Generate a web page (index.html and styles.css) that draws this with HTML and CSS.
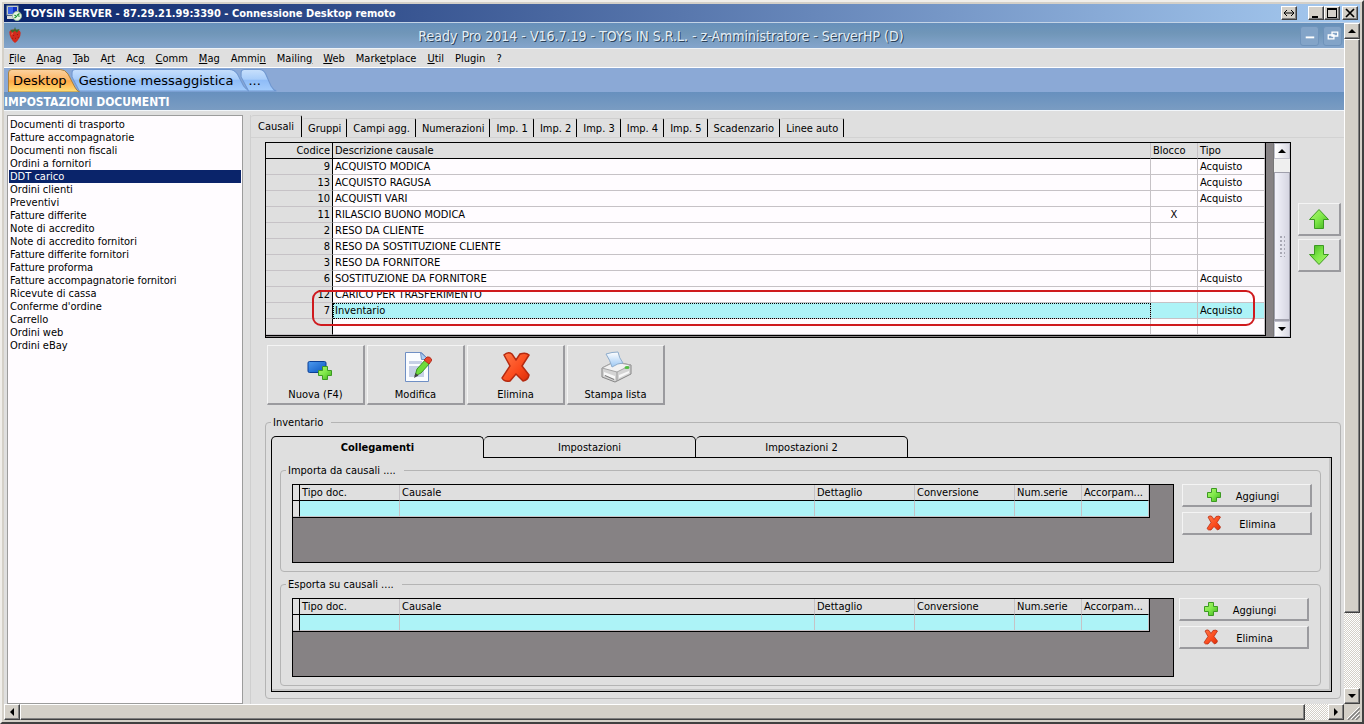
FILE: index.html
```html
<!DOCTYPE html>
<html lang="it">
<head>
<meta charset="utf-8">
<title>TOYSIN SERVER - Connessione Desktop remoto</title>
<link rel="stylesheet" href="styles.css">
</head>
<body>
<svg class="defs" aria-hidden="true">
  <defs>
    <linearGradient id="gGreen" x1="0" y1="0" x2="1" y2="1"><stop offset="0" stop-color="#b4f573"/><stop offset=".5" stop-color="#7ee848"/><stop offset="1" stop-color="#3fae1c"/></linearGradient>
    <linearGradient id="gRed" x1="0" y1="0" x2="1" y2="1"><stop offset="0" stop-color="#ff7a4a"/><stop offset=".6" stop-color="#fb4a1c"/><stop offset="1" stop-color="#d92c08"/></linearGradient>
    <linearGradient id="gBlue" x1="0" y1="0" x2="1" y2="1"><stop offset="0" stop-color="#4d9bf0"/><stop offset="1" stop-color="#0a55c0"/></linearGradient>
    <linearGradient id="gPaper" x1="0" y1="0" x2="0" y2="1"><stop offset="0" stop-color="#fff"/><stop offset="1" stop-color="#9cc8f4"/></linearGradient>
    <linearGradient id="gOrange" x1="0" y1="0" x2="0" y2="1"><stop offset="0" stop-color="#fbd2a0"/><stop offset=".45" stop-color="#fdb665"/><stop offset=".5" stop-color="#fda843"/><stop offset="1" stop-color="#ffe07a"/></linearGradient>
    <linearGradient id="gTab" x1="0" y1="0" x2="0" y2="1"><stop offset="0" stop-color="#c8e0fc"/><stop offset=".45" stop-color="#a8cdfa"/><stop offset=".5" stop-color="#8fbcf7"/><stop offset="1" stop-color="#a4ccfc"/></linearGradient>
    <symbol id="plus" viewBox="0 0 16 16"><path d="M5.500 1.500h5v4h4v5h-4v4h-5v-4h-4v-5h4z" fill="url(#gGreen)" stroke="#3c9a22"/></symbol>
    <symbol id="cross" viewBox="0 0 32 32"><path d="M4 4Q8 0 12 3L16 9L20 3Q26 1 29 4L22 15L29 24Q28 29 23 30L16 23L10 30Q4 31 2 27L10 15Z" fill="url(#gRed)" stroke="#b52a10" stroke-width="1.500"/></symbol>
    <symbol id="arrow" viewBox="0 0 22 22"><path d="M11 1.500L20.500 11.500H15.500V20.500H6.500V11.500H1.500Z" fill="url(#gGreen)" stroke="#3c9a22"/></symbol>
  </defs>
</svg>
<div class="window">
  <header class="rdp-bar">
    <svg class="rdp-icon" viewBox="0 0 16 16"><rect x="1" y="1" width="11" height="9" fill="#e6e6e6" stroke="#9aa"/><rect x="2" y="2" width="9" height="7" fill="#1030c0"/><path d="M2 2h5v7h-5z" fill="#3a62e8"/><path d="M1 11h11l2 3H1z" fill="#d8d8d8"/><circle cx="11" cy="11" r="4.500" fill="#e8f4e4" stroke="#9ab89a"/><path d="M8.500 10l2 1.500-2 1.500M13.500 8.500l-2 1.500 2 1.500" fill="none" stroke="#16902a" stroke-width="1.200"/></svg>
    <h1 class="rdp-title">TOYSIN SERVER - 87.29.21.99:3390 - Connessione Desktop remoto</h1>
    <div class="rdp-buttons">
      <button class="win-btn win-btn-pin" aria-label="Adatta"><svg viewBox="0 0 12 10"><path d="M1 5h10M4 2L1 5l3 3M8 2l3 3-3 3" fill="none" stroke="#000"/></svg></button>
      <button class="win-btn" aria-label="Riduci"><svg viewBox="0 0 12 10"><path d="M2 8h6v2H2z"/></svg></button>
      <button class="win-btn" aria-label="Ingrandisci"><svg viewBox="0 0 12 10"><path d="M1 0h10v10H1zM2 2v7h8V2z" fill-rule="evenodd"/></svg></button>
      <button class="win-btn win-btn-close" aria-label="Chiudi"><svg viewBox="0 0 12 10"><path d="M2 1l8 8M10 1l-8 8" stroke="#000" stroke-width="1.700"/></svg></button>
    </div>
  </header>
  <div class="remote">
    <div class="app">
      <div class="app-bar">
        <svg class="berry" viewBox="0 0 14 18"><path d="M1 5Q3 2 7 3Q12 2 13 6Q13 12 7 17Q1 12 1 5Z" fill="#d22a1c"/><path d="M4 4Q6 7 3 9Z" fill="#ef6a55"/><path d="M7 0L8 3L12 2L9 6L7 4L4 6L2 3L6 3Z" fill="#3e6b2c"/><path d="M5 9h1M9 8h1M7 12h1M10 11h1M4 12h1" stroke="#8e1410"/></svg>
        <h2 class="app-title">Ready Pro 2014 - V16.7.19 - TOYS IN S.R.L. - z-Amministratore - ServerHP (D)</h2>
        <div class="app-buttons">
          <button class="mdi-btn" aria-label="Riduci"><svg viewBox="0 0 18 18"><path d="M5 10h9v2H5z" fill="#fff"/></svg></button>
          <button class="mdi-btn" aria-label="Ripristina"><svg viewBox="0 0 18 18"><path d="M8.500 5.500h6v4h-6zM4.500 8.500h6v4h-6z" fill="none" stroke="#fff" stroke-width="1.400"/></svg></button>
        </div>
      </div>
      <nav class="menu">
        <button><u>F</u>ile</button><button><u>A</u>nag</button><button><u>T</u>ab</button><button>A<u>r</u>t</button><button>Ac<u>g</u></button><button><u>C</u>omm</button><button><u>M</u>ag</button><button>Ammi<u>n</u></button><button>Mailin<u>g</u></button><button><u>W</u>eb</button><button>Mark<u>e</u>tplace</button><button><u>U</u>til</button><button>Plugin</button><button>?</button>
      </nav>
      <div class="doc-tabs">
        <button class="doc-tab doc-tab-active"><svg viewBox="0 0 74 23" preserveAspectRatio="none"><path d="M.5 23V4Q.5 .5 4 .5H54Q59 .5 62 5L69 18Q71 22 74 23Z" fill="url(#gOrange)" stroke="#a8803c"/></svg><span>Desktop</span></button>
        <button class="doc-tab doc-tab-wide"><svg viewBox="0 0 174 23" preserveAspectRatio="none"><path d="M8 22L1 8V4Q1 .5 4 .5H154Q159 .5 162 5L168 17Q171 21 174 22Z" fill="url(#gTab)" stroke="#6f97d0"/></svg><span>Gestione messaggistica</span></button>
        <button class="doc-tab doc-tab-more"><svg viewBox="0 0 34 23" preserveAspectRatio="none"><path d="M8 22L1 8V4Q1 .5 4 .5H18Q22 .5 24 5L29 17Q31 21 34 22Z" fill="url(#gTab)" stroke="#6f97d0"/></svg><span>...</span></button>
      </div>
      <h3 class="section-title">IMPOSTAZIONI DOCUMENTI</h3>
      <main class="workspace">
        <ul class="doc-list">
          <li>Documenti di trasporto</li><li>Fatture accompagnatorie</li><li>Documenti non fiscali</li><li>Ordini a fornitori</li><li class="selected">DDT carico</li><li>Ordini clienti</li><li>Preventivi</li><li>Fatture differite</li><li>Note di accredito</li><li>Note di accredito fornitori</li><li>Fatture differite fornitori</li><li>Fatture proforma</li><li>Fatture accompagnatorie fornitori</li><li>Ricevute di cassa</li><li>Conferme d'ordine</li><li>Carrello</li><li>Ordini web</li><li>Ordini eBay</li>
        </ul>
        <section class="settings">
          <div class="tabs">
            <button class="tab tab-active">Causali</button><button class="tab">Gruppi</button><button class="tab">Campi agg.</button><button class="tab">Numerazioni</button><button class="tab">Imp. 1</button><button class="tab">Imp. 2</button><button class="tab">Imp. 3</button><button class="tab">Imp. 4</button><button class="tab">Imp. 5</button><button class="tab">Scadenzario</button><button class="tab">Linee auto</button>
          </div>
          <div class="panel">
            <div class="list-row">
              <div class="grid-box">
                <table class="grid">
                  <colgroup><col class="c-code"><col><col class="c-block"><col class="c-type"></colgroup>
                  <thead><tr><th>Codice</th><th>Descrizione causale</th><th>Blocco</th><th>Tipo</th></tr></thead>
                  <tbody>
                    <tr><th>9</th><td>ACQUISTO MODICA</td><td></td><td>Acquisto</td></tr>
                    <tr><th>13</th><td>ACQUISTO RAGUSA</td><td></td><td>Acquisto</td></tr>
                    <tr><th>10</th><td>ACQUISTI VARI</td><td></td><td>Acquisto</td></tr>
                    <tr><th>11</th><td>RILASCIO BUONO MODICA</td><td>X</td><td></td></tr>
                    <tr><th>2</th><td>RESO DA CLIENTE</td><td></td><td></td></tr>
                    <tr><th>8</th><td>RESO DA SOSTITUZIONE CLIENTE</td><td></td><td></td></tr>
                    <tr><th>3</th><td>RESO DA FORNITORE</td><td></td><td></td></tr>
                    <tr><th>6</th><td>SOSTITUZIONE DA FORNITORE</td><td></td><td>Acquisto</td></tr>
                    <tr><th>12</th><td>CARICO PER TRASFERIMENTO</td><td></td><td></td></tr>
                    <tr class="current"><th>7</th><td>Inventario</td><td></td><td>Acquisto</td></tr>
                    <tr><th></th><td></td><td></td><td></td></tr>
                  </tbody>
                </table>
                <div class="grid-scroll">
                  <button class="soft-btn" aria-label="Su"><svg viewBox="0 0 8 4"><path d="M4 0l4 4H0z"/></svg></button>
                  <div class="soft-track"></div>
                  <div class="soft-thumb"><i></i></div>
                  <button class="soft-btn" aria-label="Giù"><svg viewBox="0 0 8 4"><path d="M0 0h8L4 4z"/></svg></button>
                </div>
                <div class="highlight"></div>
              </div>
              <div class="order">
                <button class="raised" aria-label="Sposta su"><svg class="i22"><use href="#arrow"/></svg></button>
                <button class="raised" aria-label="Sposta giù"><svg class="i22 flip"><use href="#arrow"/></svg></button>
              </div>
            </div>
            <div class="actions">
              <button class="raised action"><svg viewBox="0 0 32 32"><rect x="8" y="10.500" width="18" height="11" rx="1.500" fill="url(#gBlue)" stroke="#0a3f96"/><svg x="17" y="14" width="16" height="16"><use href="#plus"/></svg></svg>Nuova (F4)</button>
              <button class="raised action"><svg viewBox="0 0 32 32"><path d="M5.500 1.500h16l7 7v22h-23z" fill="#fafcff" stroke="#6f8fc4"/><path d="M20.500 1.500l1 7h7z" fill="#a9cdf4" stroke="#6f8fc4"/><path d="M9 10h13v3H9zM9 15h15v11H9z" fill="#c6d0e6"/><path d="M15 25L17 18L26 8L30 12L21 22Z" fill="#6edb3c" stroke="#3b9422"/><path d="M24 9L27 6Q30 5 32 9L29 13Z" fill="#e8452c" stroke="#b03020"/><path d="M14 27l1.500-5 3 2.500z" fill="#444"/></svg>Modifica</button>
              <button class="raised action"><svg><use href="#cross"/></svg>Elimina</button>
              <button class="raised action"><svg viewBox="0 0 32 32"><path d="M2 17L14 11L31 14V23L15 31L2 26Z" fill="#d4d4d4" stroke="#858585"/><path d="M2 17L14 11L31 14L17 21Z" fill="#f2f2f2" stroke="#a4a4a4"/><path d="M17 21v9" stroke="#999"/><path d="M6 3Q12 1 18 1Q19 7 23 12Q18 12 12 16Q10 9 6 3Z" fill="url(#gPaper)" stroke="#8daccc"/><path d="M4 21l11 4v3L4 24zM19 24l10-4v2l-10 5z" fill="#f8f8f8"/><path d="M5 24l9 4v1l-9-4z" fill="#777"/><ellipse cx="27" cy="16.500" rx="2.500" ry="1.500" fill="#50c040"/></svg>Stampa lista</button>
            </div>
            <fieldset class="group detail">
              <legend>Inventario</legend>
              <div class="subtabs">
                <button class="subtab subtab-active">Collegamenti</button><button class="subtab">Impostazioni</button><button class="subtab">Impostazioni 2</button>
              </div>
              <div class="subpanel">
                <fieldset class="group link-group">
                  <legend>Importa da causali ....</legend>
                  <div class="link-box">
                    <table class="links">
                      <colgroup><col class="l-head"><col class="l-doc"><col><col class="l-det"><col class="l-det"><col class="l-num"><col class="l-acc"></colgroup>
                      <thead><tr><th></th><th>Tipo doc.</th><th>Causale</th><th>Dettaglio</th><th>Conversione</th><th>Num.serie</th><th>Accorpam...</th></tr></thead>
                      <tbody><tr><th></th><td></td><td></td><td></td><td></td><td></td><td></td></tr></tbody>
                    </table>
                  </div>
                  <div class="link-actions">
                    <button class="raised small"><svg><use href="#plus"/></svg><span>Aggiungi</span></button>
                    <button class="raised small"><svg><use href="#cross"/></svg><span>Elimina</span></button>
                  </div>
                </fieldset>
                <fieldset class="group link-group link-group-export">
                  <legend>Esporta su causali ....</legend>
                  <div class="link-box">
                    <table class="links">
                      <colgroup><col class="l-head"><col class="l-doc"><col><col class="l-det"><col class="l-det"><col class="l-num"><col class="l-acc"></colgroup>
                      <thead><tr><th></th><th>Tipo doc.</th><th>Causale</th><th>Dettaglio</th><th>Conversione</th><th>Num.serie</th><th>Accorpam...</th></tr></thead>
                      <tbody><tr><th></th><td></td><td></td><td></td><td></td><td></td><td></td></tr></tbody>
                    </table>
                  </div>
                  <div class="link-actions">
                    <button class="raised small"><svg><use href="#plus"/></svg><span>Aggiungi</span></button>
                    <button class="raised small"><svg><use href="#cross"/></svg><span>Elimina</span></button>
                  </div>
                </fieldset>
              </div>
            </fieldset>
          </div>
        </section>
      </main>
    </div>
    <div class="vscroll">
      <button class="win-btn scroll-btn" aria-label="Scorri su"><svg viewBox="0 0 8 4"><path d="M4 0l4 4H0z"/></svg></button>
      <div class="thumb thumb-v"></div>
      <div class="track track-v"></div>
      <button class="win-btn scroll-btn" aria-label="Scorri giù"><svg viewBox="0 0 8 4"><path d="M0 0h8L4 4z"/></svg></button>
    </div>
  </div>
  <div class="hscroll">
    <button class="win-btn scroll-btn" aria-label="Scorri a sinistra"><svg class="side" viewBox="0 0 4 8"><path d="M4 0v8L0 4z"/></svg></button>
    <div class="thumb thumb-h"></div>
    <div class="track track-h"></div>
    <button class="win-btn scroll-btn" aria-label="Scorri a destra"><svg class="side" viewBox="0 0 4 8"><path d="M0 0v8l4-4z"/></svg></button>
    <svg class="grip" viewBox="0 0 16 16"><path d="M4 16L16 4M8 16L16 8M12 16L16 12" stroke="#808080" stroke-width="1.500"/><path d="M3 15L15 3M7 15L15 7M11 15L15 11" stroke="#fff"/></svg>
  </div>
</div>
</body>
</html>
```
FILE: styles.css
```css
* { box-sizing: border-box; }
body {
  margin: 0;
  background: #d4d0c8;
  color: #000;
  font: 11px/13px "DejaVu Sans Condensed", "DejaVu Sans", "Noto Sans", sans-serif;
}
h1, h2, h3, ul, fieldset { margin: 0; padding: 0; border: 0; font-size: inherit; list-style: none; }
button { margin: 0; padding: 0; border: 0; background: none; color: inherit; font: inherit; }
svg { display: block; }
.defs { position: absolute; width: 0; height: 0; }

.window {
  display: flex;
  flex-direction: column;
  min-height: 100vh;
  padding: 2px;
  border: 2px solid;
  border-color: #f0eeea #404040 #404040 #f0eeea;
  background: #d4d0c8;
}

/* Outer title bar */
.rdp-bar {
  display: flex;
  align-items: center;
  height: 18px;
  padding: 0 2px;
  background: linear-gradient(90deg, #0a246a, #a6caf0);
}
.rdp-icon { width: 16px; height: 16px; }
.rdp-title { flex: 1; margin-left: 2px; color: #fff; font-weight: bold; }
.rdp-buttons { display: flex; }
.win-btn {
  display: flex;
  align-items: center;
  justify-content: center;
  width: 16px;
  height: 14px;
  border: 1px solid;
  border-color: #fff #404040 #404040 #fff;
  background: #d4d0c8;
  box-shadow: inset -1px -1px #808080;
}
.win-btn svg { width: 12px; height: 10px; }
.win-btn-pin { margin-right: 11px; }
.win-btn-close { margin-left: 2px; }

.remote { display: flex; flex: 1; border-top: 1px solid #c3d3e6; }
.app { display: flex; flex: 1; flex-direction: column; background: #dfdfdf; }
.app-bar {
  display: flex;
  align-items: center;
  height: 25px;
  padding: 0 2px 0 4px;
  background: linear-gradient(#6790bb, #7096b8 40%, #84a5cc);
}
.berry { width: 14px; height: 17px; }
.app-title {
  flex: 1;
  color: #e4eef6;
  font: 14px/16px "DejaVu Sans Condensed", "DejaVu Sans", sans-serif;
  text-align: center;
  text-shadow: 1px 1px #2c4258;
}
.app-buttons { display: flex; gap: 4px; }
.mdi-btn { width: 19px; height: 20px; border: 1px solid #6f93bb; border-radius: 3px; background: #83a4c8; }

.menu {
  display: flex;
  gap: 11px;
  height: 20px;
  padding: 0 5px;
  border-top: 1px solid #eef2f6;
  border-bottom: 1px solid #fff;
}

.doc-tabs { display: flex; align-items: flex-end; height: 24px; padding-left: 4px; background: #8ba9d6; }
.doc-tab { position: relative; height: 23px; padding: 0 16px 0 5px; font: 13px/22px "DejaVu Sans", sans-serif; }
.doc-tab svg { position: absolute; inset: 0; width: 100%; height: 100%; }
.doc-tab span { position: relative; }
.doc-tab-active { z-index: 1; padding-right: 13px; }
.doc-tab-wide, .doc-tab-more { margin-left: -9px; padding-left: 8px; }
.section-title {
  height: 19px;
  border-bottom: 1px solid #f2f6fa;
  background: linear-gradient(#6790be, #7a9cc2);
  color: #fff;
  font: bold 12px/20px "DejaVu Sans Condensed", "DejaVu Sans", sans-serif;
}

.workspace { display: flex; flex: 1; gap: 7px; padding: 4px 0 0 3px; }
.doc-list { width: 236px; padding: 2px 1px; border: 1px solid #9c9c9c; background: #fffcff; }
.doc-list li { padding-left: 1px; }
.doc-list .selected { background: #0a246a; color: #fff; }

.settings { display: flex; flex: 1; flex-direction: column; min-width: 0; border-left: 1px solid #cfcfcf; }
.tabs { display: flex; align-items: flex-end; height: 22px; }
.tab {
  height: 19px;
  padding: 1px 5px 0 6px;
  border-top: 1px solid #cfcfcf;
  border-right: 1px solid #000;
  border-radius: 3px 2px 0 0;
}
.tab-active { height: 22px; padding: 0 7px; }
.panel { display: flex; flex: 1; flex-direction: column; padding: 4px 3px 5px 14px; border-top: 1px solid #d2d2d2; }

/* Main list */
.list-row { display: flex; gap: 7px; }
.grid-box {
  position: relative;
  display: flex;
  flex: 1;
  padding-bottom: 1px;
  border: 1px solid #000;
  background: #868284;
}
.grid, .links { border-spacing: 0; table-layout: fixed; }
.grid { flex: 1; width: 0; margin-right: 7px; border-right: 1px solid #000; border-bottom: 1px solid #000; }
.grid th, .grid td, .links th, .links td {
  overflow: hidden;
  height: 16px;
  padding: 0 2px;
  border: solid #c6c2c6;
  border-width: 0 1px 1px 0;
  background: #fffcff;
  font-weight: normal;
  line-height: 15px;
  text-align: left;
  white-space: nowrap;
}
.grid th, .links th { background: #dfdfdf; }
.grid thead th, .links thead th { border-bottom-color: #000; }
.grid th:first-child { border-right-color: #000; text-align: right; }
.grid td:nth-child(3) { text-align: center; }
.grid .current td { background: #adf3f7; }
.grid .current td:nth-child(2) { outline: 1px dotted #000; outline-offset: -1px; }
.c-code { width: 67px; }
.c-block { width: 47px; }
.c-type { width: 67px; }
.grid-scroll { display: flex; flex-direction: column; width: 17px; margin-bottom: -1px; border-left: 1px solid #777; background: #efefef; }
.soft-btn {
  display: flex;
  align-items: center;
  justify-content: center;
  height: 16px;
  border: 1px solid #c0c0cc;
  background: linear-gradient(90deg, #fff, #dadae4);
}
.soft-btn svg { width: 8px; height: 4px; }
.soft-track { height: 13px; }
.soft-thumb {
  display: flex;
  flex: 1;
  align-items: center;
  justify-content: center;
  border: 1px solid #a0a0ac;
  border-bottom-width: 2px;
  background: linear-gradient(90deg, #f2f2fa, #d6d6e2);
}
.soft-thumb i { width: 6px; height: 22px; background: radial-gradient(#a8a8b4 1px, transparent 1px) 0 0 / 4px 4px; }
.highlight {
  position: absolute;
  right: 35px;
  bottom: 11px;
  left: 46px;
  height: 36px;
  border: 2px solid #cf1a1e;
  border-radius: 9px;
  pointer-events: none;
}

.raised {
  border: solid;
  border-width: 1px 2px 2px 1px;
  border-color: #f4f4f4 #9a9a9e #9a9a9e #f4f4f4;
  background: #dfdfdf;
}
.order { display: flex; flex-direction: column; gap: 3px; padding-top: 61px; }
.order .raised { display: flex; align-items: center; justify-content: center; width: 43px; height: 33px; }
.i22 { width: 22px; height: 22px; }
.flip { transform: rotate(180deg); }
.actions { display: flex; gap: 2px; padding: 7px 0 0 2px; }
.action { display: flex; flex-direction: column; align-items: center; gap: 5px; width: 98px; height: 60px; padding-top: 5px; }
.action > svg { width: 32px; height: 32px; }

/* Group boxes */
.group { min-width: 0; border: 1px solid #b4b4b4; border-radius: 4px; }
.group legend { padding: 0 8px 0 2px; }
.detail { display: flex; flex: 1; flex-direction: column; margin-top: 11px; padding: 7px 8px 6px 5px; }
.subtabs { position: relative; z-index: 1; display: flex; height: 22px; }
.subtab {
  width: 212px;
  border: 1px solid #000;
  border-left: 0;
  border-radius: 5px 5px 0 0;
}
.subtab-active { width: 213px; border-bottom: 0; border-left: 1px solid #000; background: #dfdfdf; font-weight: bold; }
.subpanel {
  flex: 1;
  margin-top: -1px;
  padding: 6px 10px 4px 8px;
  border: 1px solid #000;
  box-shadow: inset -2px -2px #c4c4c4;
}
.link-group { display: flex; gap: 8px; padding: 7px 8px 8px 11px; }
.link-group legend { margin-left: -6px; }
.link-group-export { margin-top: 6px; gap: 5px; padding-right: 11px; }
.link-box { flex: 1; height: 79px; border: 1px solid #000; background: #868284; }
.links { width: calc(100% - 23px); border-right: 1px solid #000; border-bottom: 1px solid #000; }
.links td { background: #adf3f7; }
.links th:first-child { border-right-color: #000; padding: 0; }
.l-head { width: 7px; }
.l-doc, .l-det { width: 100px; }
.l-num { width: 67px; }
.l-acc { width: 67px; }
.link-actions { display: flex; flex-direction: column; gap: 5px; }
.small { display: flex; align-items: center; width: 130px; height: 23px; padding: 0 17px 0 23px; }
.small svg { width: 16px; height: 16px; }
.small span { flex: 1; padding-top: 2px; text-align: center; }

/* Window scroll bars */
.vscroll { display: flex; flex-direction: column; width: 16px; }
.scroll-btn { flex: none; width: 16px; height: 16px; }
.scroll-btn svg { width: 8px; height: 4px; }
.scroll-btn .side { width: 4px; height: 8px; }
.thumb { border: 1px solid; border-color: #fff #404040 #404040 #fff; background: #d4d0c8; box-shadow: inset -1px -1px #808080; }
.thumb-v { flex: 574; }
.thumb-h { flex: 1285; }
.track { background: repeating-conic-gradient(#fff 0 25%, #d4d0c8 0 50%) 0 0 / 2px 2px; }
.track-v { flex: 75; }
.track-h { flex: 23; }
.hscroll { display: flex; height: 16px; }
.grip { width: 16px; height: 16px; }
```
